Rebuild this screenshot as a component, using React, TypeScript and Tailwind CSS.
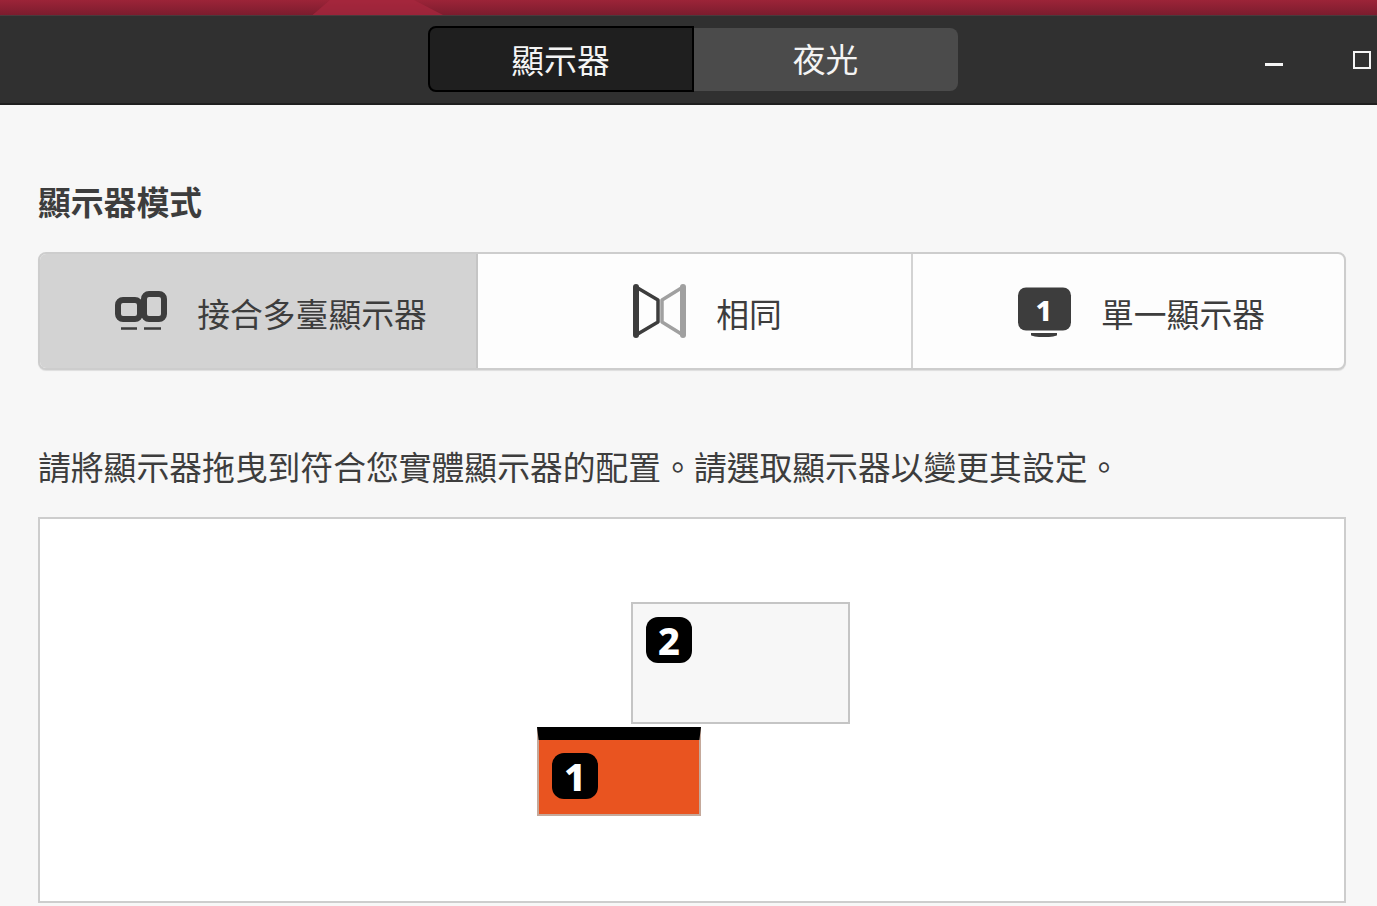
export default function App() {
  return (
    <div className={`h-[906px] w-[1377px] overflow-hidden bg-[#f7f7f7] [font-family:"Noto_Sans_CJK_TC","Noto_Sans",sans-serif]`}>
      <div className="relative h-[15px] overflow-hidden bg-gradient-to-b from-[#9c2438] to-[#7c1c2e]">
        <div className="absolute left-[298px] top-0 h-[15px] w-[145px] bg-[#a8283f] opacity-70 [clip-path:polygon(10%_100%,22%_0,80%_0,100%_100%)]" />
      </div>
      <header className="relative flex h-[90px] items-center justify-center border-t border-[#4a3a3c] border-b-2 border-b-[#1f1f1f] bg-[#303030]">
        <div className="flex h-[66px] w-[530px] translate-x-[4px] -translate-y-[1px]">
          <div className="flex h-full w-[266px] items-center justify-center rounded-l-lg border-2 border-black bg-[#1f1f1f] text-[32.8px] text-[#f4f4f4]">顯示器</div>
          <div className="mt-[2px] flex h-[63px] w-[264px] items-center justify-center rounded-r-lg bg-[#4b4b4b] pb-[2px] text-[32.8px] text-[#f4f4f4]">夜光</div>
        </div>
        <div className="absolute left-[1265px] top-[47px] h-[3px] w-[18px] bg-[#f4f4f4]" />
        <div className="absolute left-[1353px] top-[35px] h-[18px] w-[18px] border-2 border-[#f4f4f4]" />
      </header>
      <main className="px-[38px]">
        <h2 className="mt-[71px] h-[50px] text-[32.8px] leading-[50px] font-bold text-[#3d3d3d]">顯示器模式</h2>
        <div className="mt-[26px] flex h-[118px] w-[1308px] overflow-hidden rounded-lg border-2 border-[#cdcdcd] bg-[#fdfdfd] shadow-[0_1px_1px_rgba(0,0,0,0.1)]">
          <div className="flex w-[438px] items-center justify-center gap-[30px] border-r-2 border-[#c5c5c5] bg-[#d3d3d3] pl-[26px]">
            <svg width="52" height="40" viewBox="0 0 52 40" fill="none" stroke="#3d3d3d">
              <rect x="3" y="9" width="22" height="19" rx="5" strokeWidth="6" />
              <rect x="29" y="3" width="20" height="25" rx="5" strokeWidth="6" />
              <path d="M6 37.5h16M29 37.5h17" strokeWidth="2.5" />
            </svg>
            <span className="mt-[4px] text-[32.8px] text-[#3d3d3d]">接合多臺顯示器</span>
          </div>
          <div className="flex w-[435px] items-center justify-center gap-[29px] border-r-2 border-[#d3d3d3] pl-[26px]">
            <svg width="54" height="54" viewBox="0 0 54 54" fill="none" strokeLinejoin="round" strokeLinecap="round">
              <path d="M50 3L29 16v22l21 13" stroke="#a0a0a0" strokeWidth="3.5" />
              <path d="M50 3v48" stroke="#a0a0a0" strokeWidth="6" />
              <path d="M3 3l22 13v22L3 51" stroke="#3d3d3d" strokeWidth="3.5" />
              <path d="M3 3v48" stroke="#3d3d3d" strokeWidth="6" />
            </svg>
            <span className="mt-[4px] text-[32.8px] text-[#3d3d3d]">相同</span>
          </div>
          <div className="flex flex-1 items-center justify-center gap-[30px] pl-[25px]">
            <div className="relative flex h-[50px] w-[54px] items-center justify-center">
              <div className="flex h-[43px] w-[53px] -translate-y-[2.5px] items-center justify-center rounded-lg bg-[#3d3d3d] text-[29px] leading-none font-extrabold text-white [font-family:'Noto_Sans',sans-serif]">1</div>
              <div className="absolute bottom-[-1px] left-[14px] h-[4px] w-[26px] rounded-b-[100%] bg-[#3d3d3d]" />
            </div>
            <span className="mt-[4px] text-[32.8px] text-[#3d3d3d]">單一顯示器</span>
          </div>
        </div>
        <p className="mt-[71px] h-[50px] text-[32.8px] leading-[50px] whitespace-nowrap text-[#3d3d3d]">請將顯示器拖曳到符合您實體顯示器的配置。請選取顯示器以變更其設定。</p>
        <div className="relative mt-[26px] h-[386px] w-[1308px] border-2 border-[#cdcdcd] bg-white">
          <div className="absolute left-[591px] top-[83px] h-[122px] w-[219px] border-2 border-[#c5c5c5] bg-[#f7f7f7] p-[13px]">
            <div className="flex h-[46px] w-[46px] items-center justify-center rounded-[12px] bg-black text-[38px] leading-none font-extrabold text-white [font-family:'Noto_Sans',sans-serif]">2</div>
          </div>
          <div className="absolute left-[497px] top-[208px] h-[89px] w-[164px] border-x-2 border-b-2 border-[#c5a99b] bg-[#e95420]">
            <div className="-mx-[2px] h-[13px] bg-black [clip-path:polygon(0_0,100%_0,99%_100%,1%_100%)]" />
            <div className="ml-[13px] mt-[13px] flex h-[46px] w-[46px] items-center justify-center rounded-[12px] bg-black text-[38px] leading-none font-extrabold text-white [font-family:'Noto_Sans',sans-serif]">1</div>
          </div>
        </div>
      </main>
    </div>
  );
}
